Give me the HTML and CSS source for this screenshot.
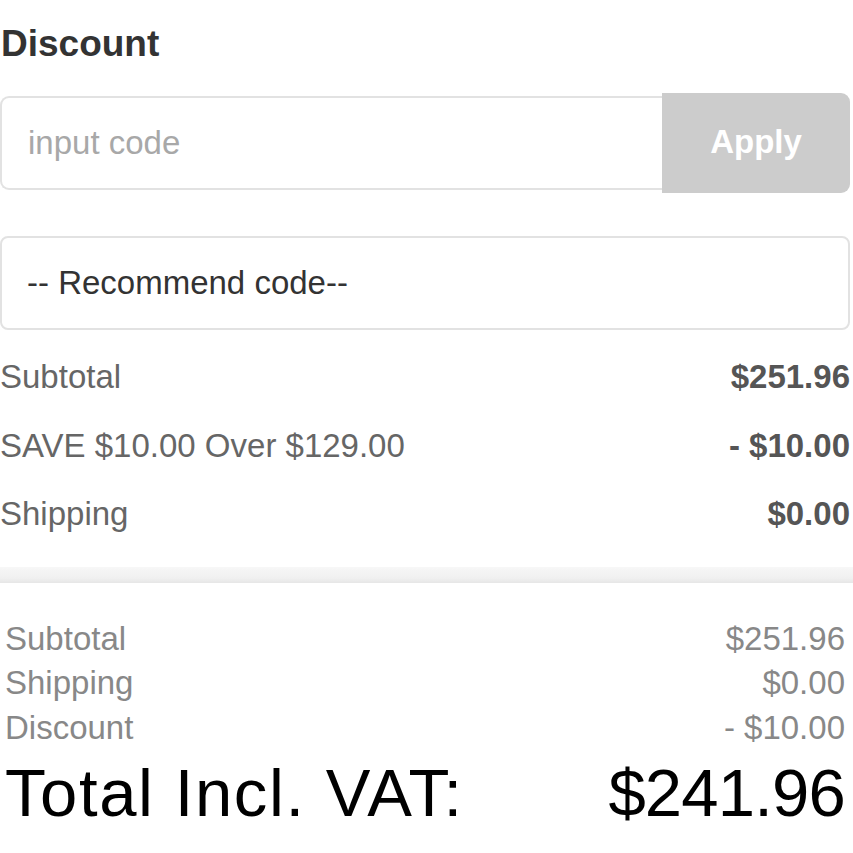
FILE: index.html
```html
<!DOCTYPE html>
<html lang="en">
<head>
<meta charset="utf-8">
<title>Discount</title>
<link rel="stylesheet" href="styles.css">
</head>
<body>
<div class="page">
  <h2 class="title">Discount</h2>
  <div class="code-row">
    <input class="code-input" type="text" placeholder="input code">
    <button class="apply" type="button">Apply</button>
  </div>
  <div class="recommend">-- Recommend code--</div>
  <div class="lines">
    <div class="line"><span>Subtotal</span><b>$251.96</b></div>
    <div class="line"><span>SAVE $10.00 Over $129.00</span><b>- $10.00</b></div>
    <div class="line"><span>Shipping</span><b>$0.00</b></div>
  </div>
  <div class="divider"></div>
  <div class="summary">
    <div class="sline"><span>Subtotal</span><span>$251.96</span></div>
    <div class="sline"><span>Shipping</span><span>$0.00</span></div>
    <div class="sline"><span>Discount</span><span>- $10.00</span></div>
    <div class="total"><span class="total-label">Total Incl. VAT:</span><span class="total-price">$241.96</span></div>
  </div>
</div>
</body>
</html>
```
FILE: styles.css
```css
html, body {
  margin: 0;
  padding: 0;
  background: #fff;
}
body {
  font-family: "Liberation Sans", Arial, sans-serif;
}
.page {
  width: 850px;
}
.title {
  margin: 22px 0 0 1px;
  font-size: 37px;
  line-height: 44px;
  font-weight: bold;
  color: #333;
}
.code-row {
  margin-top: 27px;
  display: flex;
  align-items: center;
}
.code-input {
  box-sizing: border-box;
  width: 662px;
  height: 94px;
  margin: 0;
  padding: 0 0 0 26px;
  border: 2px solid #e2e2e2;
  border-right: none;
  border-radius: 9px 0 0 9px;
  font-family: "Liberation Sans", Arial, sans-serif;
  font-size: 33px;
  color: #333;
  outline: none;
  background: #fff;
}
.code-input::placeholder {
  color: #a8a8a8;
}
.apply {
  box-sizing: border-box;
  width: 188px;
  height: 100px;
  margin: 0;
  border: none;
  border-radius: 0 9px 9px 0;
  background: #cccccc;
  color: #fff;
  font-family: "Liberation Sans", Arial, sans-serif;
  font-size: 33px;
  font-weight: bold;
  padding: 0 0 2px 0;
}
.recommend {
  box-sizing: border-box;
  margin-top: 43px;
  height: 94px;
  border: 2px solid #e2e2e2;
  border-radius: 8px;
  padding-left: 25px;
  display: flex;
  align-items: center;
  font-size: 33px;
  color: #333;
}
.lines {
  margin-top: 13px;
}
.line {
  display: flex;
  justify-content: space-between;
  height: 68.5px;
  align-items: center;
  font-size: 33px;
  color: #666;
}
.line b {
  color: #555;
  font-weight: bold;
}
.divider {
  margin-top: 18px;
  height: 16px;
  width: 853px;
  background: linear-gradient(#f7f7f7, #f0f0f0 70%, #e6e6e6);
}
.summary {
  margin-top: 34px;
  padding: 0 5px;
}
.sline {
  display: flex;
  justify-content: space-between;
  font-size: 33px;
  line-height: 44.5px;
  color: #888;
}
.total {
  margin-top: 4px;
  display: flex;
  justify-content: space-between;
  font-size: 67px;
  line-height: 77px;
  color: #000;
}
.total-label {
  letter-spacing: 1.6px;
}
.total-price {
  letter-spacing: -0.8px;
}
```
